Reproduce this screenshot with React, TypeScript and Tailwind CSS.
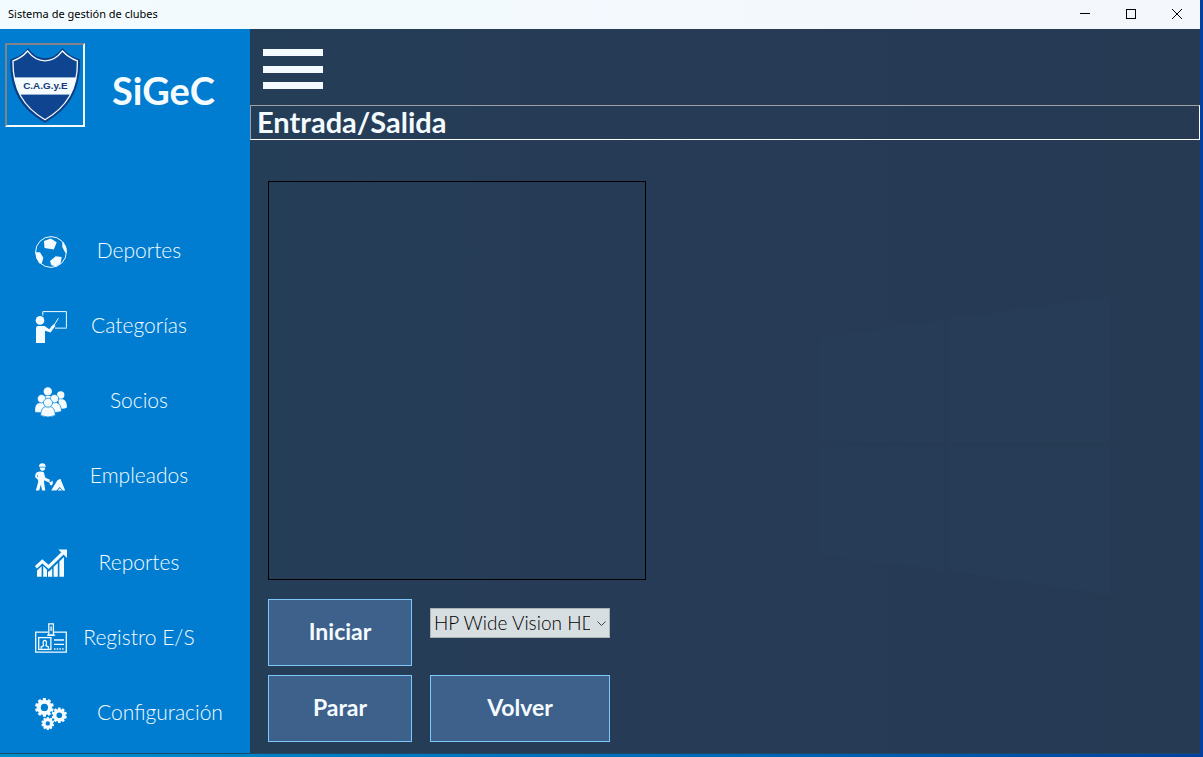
import type { ReactNode } from "react";

function Shield() {
  return (
    <svg viewBox="20 45 230 240" className="h-full w-full" role="img" aria-label="C.A.G.y.E">
      <defs>
        <clipPath id="shield-body">
          <path d="M82 61 Q66 80 38 90 C37 178 70 232 135 270 C200 232 235 178 233 90 Q206 80 188 61 Q165 91 135 91 Q105 91 82 61Z" />
        </clipPath>
      </defs>
      <path d="M84 53 Q66 77 30 88 C27 184 66 241 135 279 C204 241 244 184 241 88 Q206 77 188 53 Q166 84 135 84 Q104 84 84 53Z" fill="#0d3f86" />
      <path d="M82 62 Q66 82 38 92 C37 178 70 232 135 270 C200 232 235 178 233 92 Q206 82 188 62 Q165 92 135 92 Q105 92 82 62Z" fill="#0f4590" stroke="#f4fbff" strokeWidth="4" />
      <rect x="30" y="142" width="212" height="52" fill="#f4fbff" clipPath="url(#shield-body)" />
      <text x="136" y="178" textAnchor="middle" fontSize="30" fontWeight="700" fill="#163a75" fontFamily="Liberation Sans, sans-serif">
        C.A.G.y.E
      </text>
    </svg>
  );
}

function Icon({ children }: { children: ReactNode }) {
  return (
    <svg viewBox="0 0 32 32" fill="#f4fbff" aria-hidden="true" className="h-8 w-8 shrink-0">
      {children}
    </svg>
  );
}

const BallIcon = () => (
  <Icon>
    <circle cx="16" cy="16" r="15.4" fill="none" stroke="#f4fbff" strokeWidth="1" />
    <path d="M9 5 15.7 2.6 21.7 6.3 18.8 13.4 9.5 12Z" />
    <path d="M27.3 6.6 28.6 6.2 31.5 12 31.6 17 30 16.3 27.3 11Z" />
    <path d="M.6 16.3H5L8.3 21.7 6.9 27.3 4.3 27.6 1.6 22.5Z" />
    <path d="M15 25 20.7 20.2 26.7 21 25.6 27.3 20.7 30.6 16.2 29Z" />
  </Icon>
);

const TeacherIcon = () => (
  <Icon>
    <path d="M7.8 4.5V.6H31.4V16.6" fill="none" stroke="#f4fbff" strokeWidth="1" />
    <path d="M20 17.2H31.8" fill="none" stroke="#f4fbff" strokeWidth="1.6" opacity=".6" />
    <circle cx="5" cy="9.4" r="4.3" />
    <path d="M1 17.2Q1 15 3.2 15H9.6L14.2 18.2 18.3 13.2 20.5 14.8 15.6 21.6 10 19.7V32H1Z" />
    <path d="M19 14.4 23.4 7.2" stroke="#f4fbff" strokeWidth="1" />
  </Icon>
);

const PeopleIcon = () => (
  <Icon>
    <circle cx="12.8" cy="5.4" r="4.2" />
    <circle cx="25.7" cy="9" r="3.7" />
    <path d="M23 13.2H28Q32 14.4 32 21.5 29.5 23 25 22.6Z" />
    <path d="M8.5 10H17.5L19 14 16 20H9L7 14Z" />
    <g stroke="#007dd1" strokeWidth=".7">
      <path d="M-.5 25.5Q-.5 17 5 16.5H8Q12 17.5 12 26 5 27.5-.5 26Z" />
      <path d="M14 25Q15 17 18.5 16.5H21.5Q26.4 18 26.5 25.5 20 27.5 14 26Z" />
      <circle cx="6.6" cy="12.7" r="4.2" />
      <circle cx="19.4" cy="12.7" r="4.2" />
      <path d="M5.6 29.5Q6 21.5 10.5 20.6H15.5Q20 21.5 20.3 29.5 13 32.5 5.6 29.5Z" />
      <circle cx="13" cy="16.7" r="4.5" />
    </g>
  </Icon>
);

const WorkerIcon = () => (
  <Icon>
    <g transform="translate(0 1)">
      <path d="M4 4.4Q4 1.2 7.6 1.2 10.4 1.4 10.6 4.2L11.4 4.8H4Z" />
      <path d="M4.8 5.6H10.2Q10.2 8.8 7.5 9 5 8.8 4.8 5.6Z" />
      <path d="M1.8 10.2Q5 8.8 8.6 10L10.4 15.8 15 17.8 14.4 19.6 9.4 17.8 9 20 10.3 28.6H7L5.9 22.4 4.2 28.6H.8L3.2 20 3 17.8.2 15.2Q-.2 12 1.8 10.2Z" />
      <path d="M2.4 12.2 2 14.2 3.2 15.4Z" fill="#007dd1" />
      <path d="M9.4 17.8 15.8 20.8" stroke="#f4fbff" strokeWidth="1.1" />
      <path d="M17.6 18.4 15 20.7Q13.7 22.7 17 23.4 18.4 21.6 17.6 18.4Z" />
      <path d="M16.2 28.6 22.4 18.2 25.4 16.8 30.2 28.6H27.8L24.8 25 21.4 28.6Z" />
      <path d="M22.6 28.6 24.9 26.2 27 28.6Z" />
    </g>
  </Icon>
);

const ReportIcon = () => (
  <Icon>
    <g transform="translate(0 .7)">
      <path d="M.9 18.6 7.3 12.6 13.6 18.2 28 4.2" fill="none" stroke="#f4fbff" strokeWidth="3.2" />
      <path d="M23.4 .8H32V9.4Z" />
      <path d="M2 21.8 6.6 17.6V28H2ZM8.2 17.4 12 21V28H8.2ZM13 22.8H14L17.2 19.8V28H13ZM18.6 18.4 22.8 14.4V28H18.6ZM24.4 12.8 29 8.4V28H24.4Z" />
    </g>
  </Icon>
);

const BadgeIcon = () => (
  <Icon>
    <g fill="none" stroke="#f4fbff" strokeWidth="1.3">
      <path d="M13 9.2H.7V29.2H31.3V9.2H19" />
      <rect x="3.7" y="14.6" width="12.2" height="11.8" />
      <path d="M13.8 12.2V.8H18.4V12.2Z" />
      <path d="M12 12.2H20.2M16.1 3.5V8" />
      <path d="M19 17H29M19 21.4H29" />
      <path d="M19 26H29" strokeDasharray="1.5 1.2" />
      <path d="M6.2 25.8V23.8L8.6 22.6Q7.2 17.5 9.8 17.4 12.4 17.5 11 22.6L13.4 23.8V25.8" />
    </g>
  </Icon>
);

function Gear({ x, y, r, hole }: { x: number; y: number; r: number; hole: number }) {
  return (
    <g transform={`translate(${x} ${y})`}>
      {[0, 36, 72, 108, 144].map((angle) => (
        <rect key={angle} x={-r} y={-r * 0.17} width={r * 2} height={r * 0.34} rx=".5" transform={`rotate(${angle + 18})`} />
      ))}
      <circle r={r * 0.82} />
      <circle r={hole} fill="#007dd1" />
    </g>
  );
}

const GearsIcon = () => (
  <Icon>
    <Gear x={9.4} y={9.4} r={9.4} hole={3.6} />
    <Gear x={24.3} y={17.2} r={7.7} hole={2.8} />
    <Gear x={12.8} y={25.4} r={6.5} hole={2.2} />
  </Icon>
);

const groups = [
  [
    { label: "Deportes", icon: <BallIcon /> },
    { label: "Categorías", icon: <TeacherIcon /> },
    { label: "Socios", icon: <PeopleIcon /> },
    { label: "Empleados", icon: <WorkerIcon /> },
  ],
  [
    { label: "Reportes", icon: <ReportIcon /> },
    { label: "Registro E/S", icon: <BadgeIcon /> },
    { label: "Configuración", icon: <GearsIcon />, wide: true },
  ],
];

function Sidebar() {
  return (
    <aside className="flex w-[250px] shrink-0 flex-col bg-[#007dd1] text-[#f4fbff]">
      <div className="flex items-center pt-3.5 pl-[5px]">
        <div className="h-[84px] w-20 border-2 border-t-[#808488] border-r-[#f4fbff] border-b-[#f4fbff] border-l-[#808488]">
          <Shield />
        </div>
        <h1 className="flex-1 pt-2.5 pr-2 text-center text-[38px] leading-10 font-bold">SiGeC</h1>
      </div>
      <nav className="flex flex-col gap-3 pt-[87px]">
        {groups.map((group, i) => (
          <ul key={i}>
            {group.map((item) => (
              <li key={item.label}>
                <button type="button" className="flex h-[75px] w-full items-center pl-[35px] text-[21px] font-light">
                  {item.icon}
                  <span className={"wide" in item ? "pb-[3px] pl-[30px]" : "w-36 pb-[3px] text-center"}>{item.label}</span>
                </button>
              </li>
            ))}
          </ul>
        ))}
      </nav>
    </aside>
  );
}

function TitleBar() {
  return (
    <header className="flex h-[29px] items-center justify-between bg-linear-to-r from-[#f2fbff] to-[#f4f7fc] pl-2 text-black">
      <span className="font-['Noto_Sans',sans-serif] text-[11px]">Sistema de gestión de clubes</span>
      <div className="flex h-full pb-0.5">
        <button type="button" aria-label="Minimizar" className="flex w-[46px] items-center justify-center">
          <svg viewBox="0 0 10 10" className="h-2.5 w-2.5"><path d="M0 4.5H10" stroke="#000" /></svg>
        </button>
        <button type="button" aria-label="Maximizar" className="flex w-[46px] items-center justify-center">
          <svg viewBox="0 0 10 10" className="h-2.5 w-2.5"><rect x=".5" y=".5" width="9" height="9" fill="none" stroke="#000" /></svg>
        </button>
        <button type="button" aria-label="Cerrar" className="flex w-[46px] items-center justify-center">
          <svg viewBox="0 0 10 10" className="h-2.5 w-2.5"><path d="M0 0 10 10M10 0 0 10" stroke="#000" /></svg>
        </button>
      </div>
    </header>
  );
}

const actionClass = "h-[67px] border border-[#7cc8fa] bg-[#3e618c] pb-0.5 text-[23px] font-bold text-[#f4fbff]";

export default function App() {
  return (
    <div className="flex min-h-screen flex-col bg-linear-to-r from-[#008fcb] via-[#0069b8] via-60% to-[#0340a0] pr-[3px] pb-[3px] font-['Century_Gothic',Lato,sans-serif]">
      <TitleBar />
      <div className="flex flex-1 border-b border-[#1d4866]">
        <Sidebar />
        <main className="relative min-w-0 flex-1 bg-linear-to-r from-[#253e57] via-[#273a56] via-55% to-[#263a54] text-[#f4fbff]">
          <svg viewBox="0 0 290 298" aria-hidden="true" className="absolute top-[268px] right-[91px] h-[298px] w-[290px]" fill="#273c56" stroke="#283f57">
            <path d="M1 42 124 24V145H1ZM130 23 289 1V145H130ZM1 151H124V272L1 257ZM130 151H289V297L130 273Z" />
          </svg>
          <div className="relative">
            <button type="button" aria-label="Menú" className="mt-5 ml-[13px] flex h-10 w-[60px] flex-col justify-between">
              <span className="h-[7px] w-full bg-[#f4fbff]" />
              <span className="h-[7px] w-full bg-[#f4fbff]" />
              <span className="h-[7px] w-full bg-[#f4fbff]" />
            </button>
            <h2 className="mt-4 h-[35px] border border-t-[#a0a0a0] border-r-white border-b-white border-l-[#a0a0a0] pl-1.5 text-[29px] leading-8 font-bold">
              Entrada/Salida
            </h2>
            <div className="pt-[41px] pl-[18px]">
              <div className="h-[399px] w-[378px] border border-black" />
              <div className="grid grid-cols-[144px_180px] gap-x-[18px] gap-y-[9px] pt-[19px] pb-[11px]">
                <button type="button" className={actionClass}>Iniciar</button>
                <div className="relative mt-[9px] h-[30px]">
                  <select aria-label="Cámara" className="h-full w-full appearance-none border border-[#adb2b5] bg-[#d7dee2] pr-[19px] pb-0.5 pl-[3px] text-[19px] font-light text-black">
                    <option>HP Wide Vision HD Camera</option>
                  </select>
                  <svg viewBox="0 0 9 6" aria-hidden="true" className="pointer-events-none absolute top-[13px] right-1 h-1.5 w-[9px]">
                    <path d="M.5 .5 4.5 4.5 8.5 .5" fill="none" stroke="#404548" />
                  </svg>
                </div>
                <button type="button" className={actionClass}>Parar</button>
                <button type="button" className={actionClass}>Volver</button>
              </div>
            </div>
          </div>
        </main>
      </div>
    </div>
  );
}
